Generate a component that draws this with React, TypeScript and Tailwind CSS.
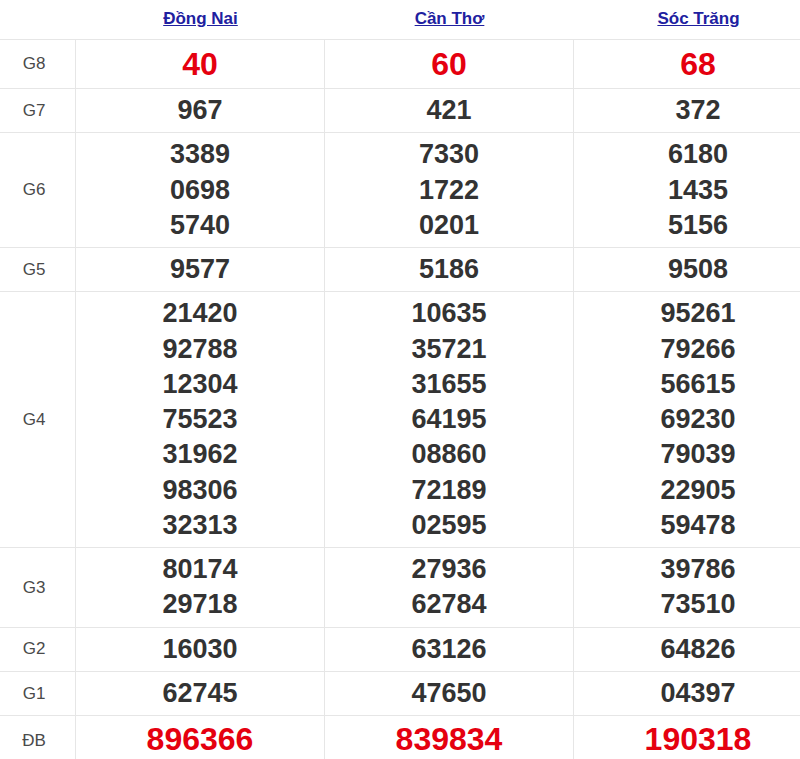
import React from "react";

const cols = ["Đồng Nai", "Cần Thơ", "Sóc Trăng"];

type Row = { label: string; values: string[][]; kind?: "g8" | "db" };

const rows: Row[] = [
  { label: "G8", values: [["40"], ["60"], ["68"]], kind: "g8" },
  { label: "G7", values: [["967"], ["421"], ["372"]] },
  {
    label: "G6",
    values: [
      ["3389", "0698", "5740"],
      ["7330", "1722", "0201"],
      ["6180", "1435", "5156"],
    ],
  },
  { label: "G5", values: [["9577"], ["5186"], ["9508"]] },
  {
    label: "G4",
    values: [
      ["21420", "92788", "12304", "75523", "31962", "98306", "32313"],
      ["10635", "35721", "31655", "64195", "08860", "72189", "02595"],
      ["95261", "79266", "56615", "69230", "79039", "22905", "59478"],
    ],
  },
  {
    label: "G3",
    values: [
      ["80174", "29718"],
      ["27936", "62784"],
      ["39786", "73510"],
    ],
  },
  { label: "G2", values: [["16030"], ["63126"], ["64826"]] },
  { label: "G1", values: [["62745"], ["47650"], ["04397"]] },
  { label: "ĐB", values: [["896366"], ["839834"], ["190318"]], kind: "db" },
];

export default function App() {
  return (
    <div
      className="w-[800px] h-[759px] overflow-hidden bg-white"
      style={{ fontFamily: '"Liberation Sans", Arial, sans-serif' }}
    >
      <div className="grid w-[823px] grid-cols-[76px_249px_249px_249px]">
        <div className="h-[40px] border-b border-[#e6e6e6]" />
        {cols.map((c) => (
          <div
            key={c}
            className="h-[40px] flex items-center justify-center border-b border-[#e6e6e6] pb-[2px]"
          >
            <a className="text-[17px] font-bold text-[#2020a0] underline leading-none">
              {c}
            </a>
          </div>
        ))}
        {rows.map((r) => (
          <React.Fragment key={r.label}>
            <div className="flex items-center justify-center border-b border-r border-[#e6e6e6] text-[17px] text-[#4a4a4a] pr-[7px]">
              {r.label}
            </div>
            {r.values.map((vals, i) => (
              <div
                key={i}
                className={
                  "flex flex-col items-center justify-center border-b border-r border-[#e6e6e6] " +
                  (r.kind === "g8"
                    ? "h-[49px] text-[32px] text-[#e5000f] font-bold leading-none"
                    : r.kind === "db"
                    ? "h-[50px] text-[32px] text-[#e5000f] font-bold leading-none pb-[4px]"
                    : "py-[4px] text-[27px] font-bold text-[#333] leading-[35.25px]")
                }
              >
                {vals.map((v) => (
                  <div key={v}>{v}</div>
                ))}
              </div>
            ))}
          </React.Fragment>
        ))}
      </div>
    </div>
  );
}
